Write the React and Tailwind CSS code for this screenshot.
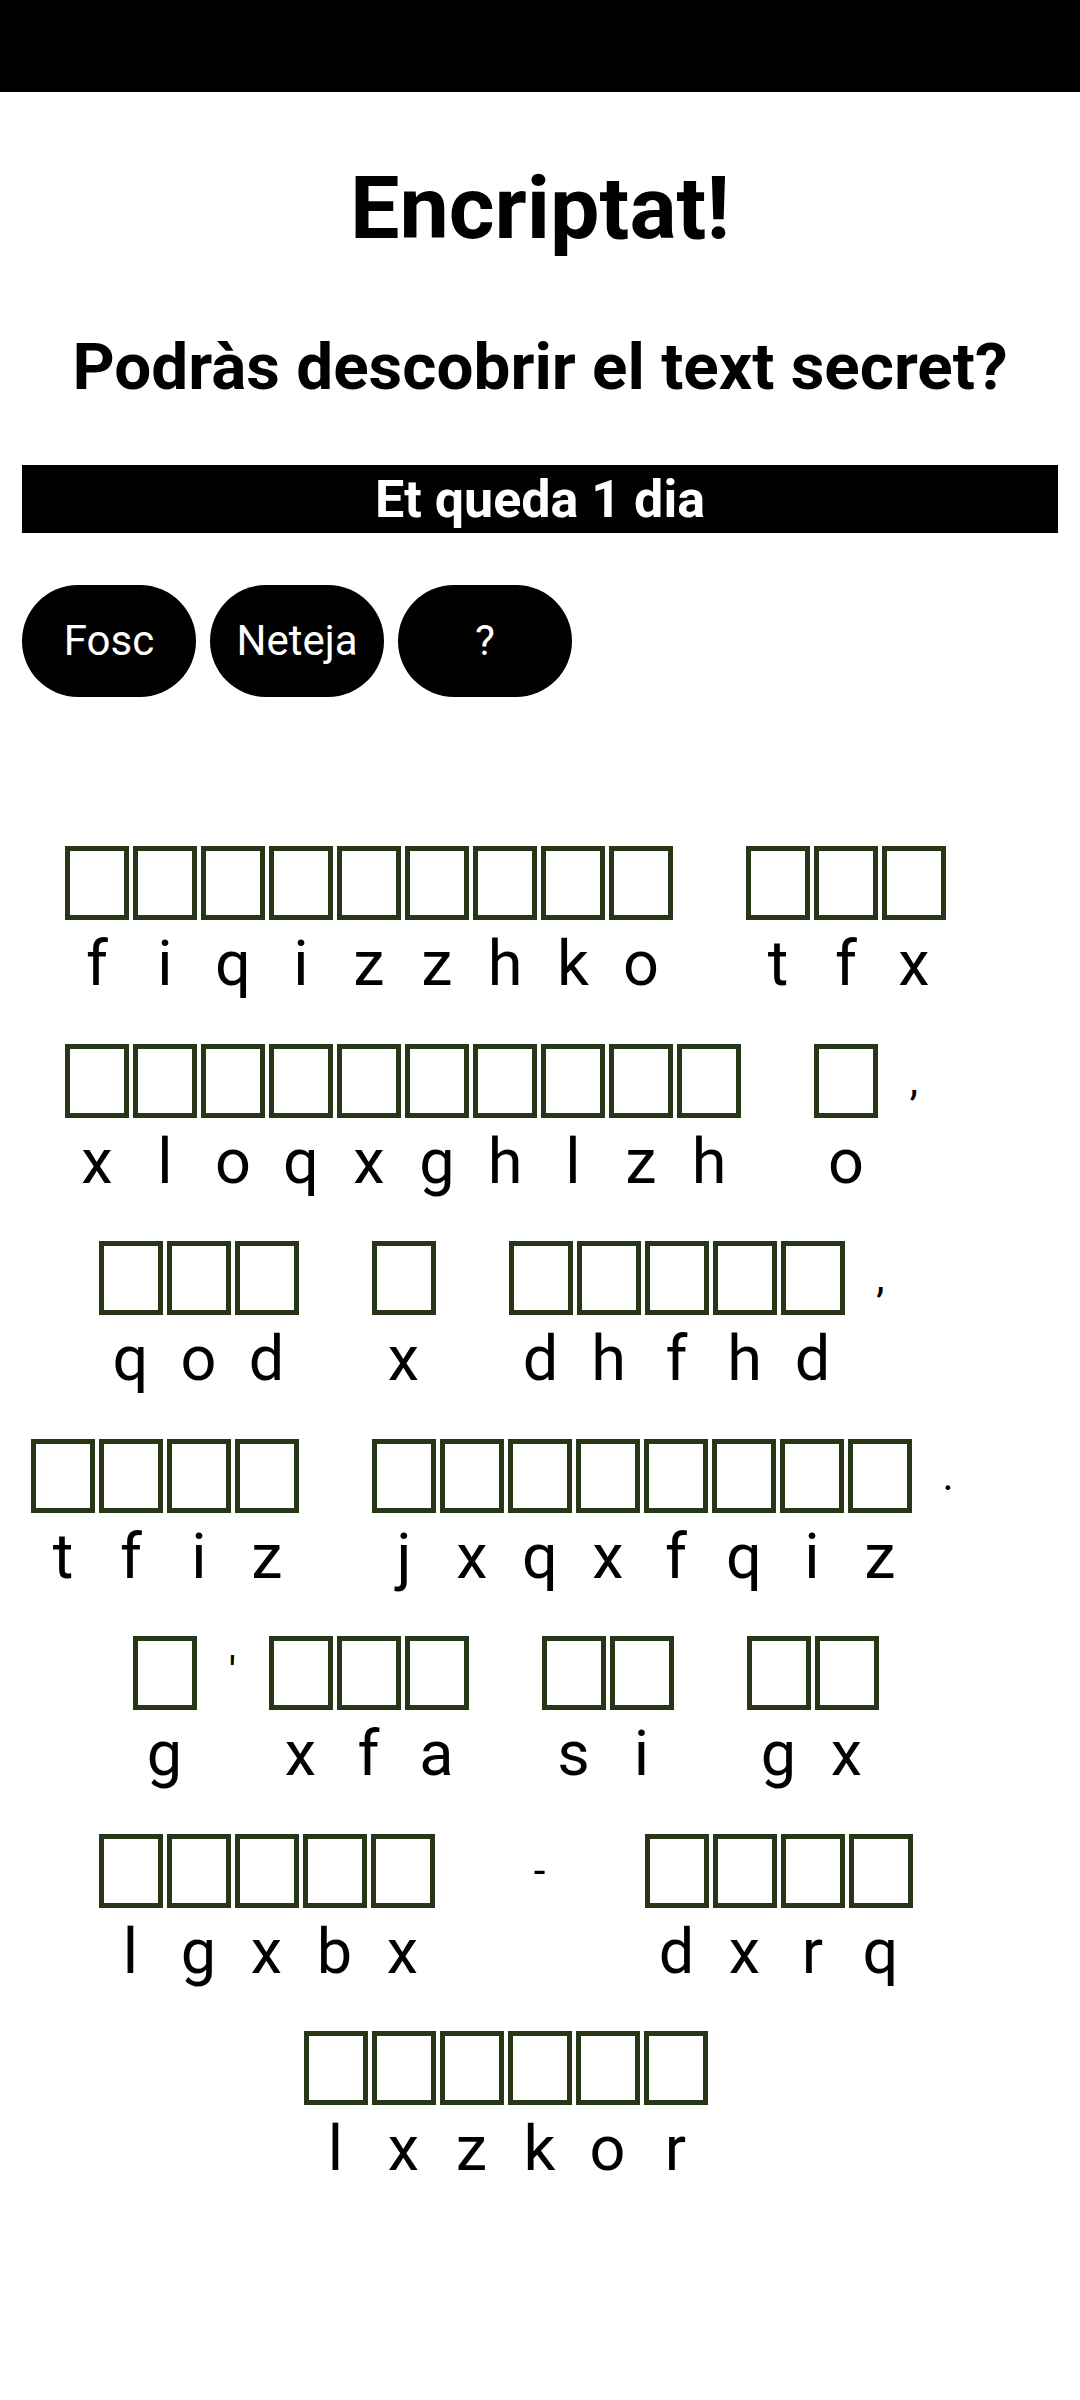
import React from "react";

const WORDS = [
  "fiqizzhko", "tfx",
  "xloqxghlzh", "o,",
  "qod", "x", "dhfhd,",
  "tfiz", "jxqxfqiz.",
  "g'xfa", "si", "gx",
  "lgxbx", "-", "dxrq",
  "lxzkor",
];

const isLetter = (c) => /[a-z]/.test(c);

function Cell({ ch }) {
  if (!isLetter(ch)) {
    return (
      <div className="w-[68px] h-[74px] flex justify-center text-[42px] leading-[74px] text-black">
        {ch}
      </div>
    );
  }
  return (
    <div className="w-[68px] flex flex-col items-center">
      <div className="w-[64px] h-[74px] border-[5px] border-[#283618] bg-white" />
      <div className="mt-[8px] text-[63px] leading-[72px] text-black">{ch}</div>
    </div>
  );
}

function Word({ word }) {
  return (
    <div className="flex items-start">
      {word.split("").map((c, i) => (
        <Cell key={i} ch={c} />
      ))}
      <div className="w-[69px] h-[74px]" />
    </div>
  );
}

export default function App() {
  return (
    <div
      className="w-[1080px] min-h-[2400px] bg-white text-black"
      style={{ fontFamily: "Roboto, 'Noto Sans', sans-serif" }}
    >
      <div className="h-[92px] bg-black" />
      <div className="px-[22px]">
        <h1 className="mt-[72px] text-center text-[88px] leading-[88px] font-bold">
          Encriptat!
        </h1>
        <h2 className="mt-[82px] text-center text-[65.6px] leading-[66px] font-bold">
          Podràs descobrir el text secret?
        </h2>
        <div className="mt-[65px] h-[68px] bg-black text-white text-center text-[52px] leading-[70px] font-bold">
          Et queda 1 dia
        </div>
        <div className="mt-[52px] flex gap-[14px]">
          {["Fosc", "Neteja", "?"].map((t) => (
            <button
              key={t}
              className="w-[174px] h-[112px] rounded-full bg-black text-white text-[42px] leading-[112px] text-center"
            >
              {t}
            </button>
          ))}
        </div>
        <div className="mt-[149px] flex flex-wrap justify-center items-start gap-y-[43.5px]">
          {WORDS.map((w, i) => (
            <Word key={i} word={w} />
          ))}
        </div>
      </div>
    </div>
  );
}
